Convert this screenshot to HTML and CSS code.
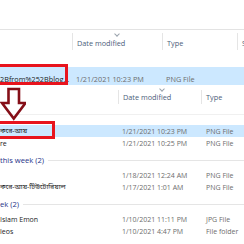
FILE: index.html
```html
<!DOCTYPE html>
<html>
<head>
	<title>explorer list</title>
	<link rel="stylesheet" href="styles.css">
</head>
<body>

<!-- first shot: the file as downloaded -->
<div class="shot shot-top">
	<div class="blank"></div>
	<div class="head head-top">
		<div class="hcell"></div>
		<div class="hcell sorted">Date modified</div>
		<div class="hcell">Type</div>
		<div class="hcell">S</div>
	</div>
	<div class="row row-top sel">
		<div class="name">2Bfrom%252Bblog...</div>
		<div class="date">1/21/2021 10:23 PM</div>
		<div class="type">PNG File</div>
		<span class="mark mark-top"></span>
	</div>
</div>

<!-- second shot: after rename -->
<div class="shot shot-bottom">
	<div class="head head-bottom">
		<div class="hcell"></div>
		<div class="hcell sorted">Date modified</div>
		<div class="hcell">Type</div>
	</div>

	<div class="row sel">
		<div class="name">করে-আয়</div>
		<div class="date">1/21/2021 10:23 PM</div>
		<div class="type">PNG File</div>
		<span class="mark mark-bottom"></span>
	</div>
	<div class="row">
		<div class="name">re</div>
		<div class="date">1/21/2021 10:25 PM</div>
		<div class="type">PNG File</div>
	</div>

	<div class="group"><span>this week (2)</span></div>
	<div class="row">
		<div class="name"></div>
		<div class="date">1/18/2021 12:24 AM</div>
		<div class="type">PNG File</div>
	</div>
	<div class="row">
		<div class="name">করে-আয়-টিউটোরিয়াল</div>
		<div class="date">1/17/2021 1:01 AM</div>
		<div class="type">PNG File</div>
	</div>

	<div class="group"><span>ek (2)</span></div>
	<div class="row">
		<div class="name">Islam Emon</div>
		<div class="date">1/10/2021 11:11 PM</div>
		<div class="type">JPG File</div>
	</div>
	<div class="row">
		<div class="name">leos</div>
		<div class="date">1/10/2021 4:47 PM</div>
		<div class="type">File folder</div>
	</div>

	<div class="group"><span>nth (7)</span></div>
</div>

<svg class="arrow" width="26" height="36" viewBox="-6 86 26 36">
	<polygon points="2.5,89 13,89 13,103 19.5,103 7.75,118.5 -4,103 2.5,103" fill="none" stroke="#850f18" stroke-width="2.6" stroke-linejoin="miter"/>
</svg>

</body>
</html>
```

FILE: styles.css
```css
		*{
			box-sizing: border-box;
		}
		body{
			margin: 0;
			width: 244px;
			height: 244px;
			overflow: hidden;
			position: relative;
			background: #fff;
			font-family: "Open Sans", "Noto Sans", "Noto Sans Bengali", sans-serif;
			font-size: 7px;
			color: #1b1b1b;
		}

		/* top screenshot */
		.shot-top{
			height: 85px;
		}
		.blank{
			height: 30px;
			border-bottom: 1px solid #e3e3e3;
		}
		.head{
			display: grid;
			color: #4c607a;
			font-size: 7.3px;
		}
		.head-top{
			grid-template-columns: 72px 90px 75px 1fr;
			height: 37px;
			padding-top: 3px;
		}
		.hcell{
			position: relative;
			border-left: 1px solid #e5e5e5;
			height: 17px;
			padding-left: 4px;
			padding-top: 5px;
			white-space: nowrap;
		}
		.hcell:first-child{
			border-left: none;
		}
		.sorted::before{
			content: "";
			position: absolute;
			top: -1px;
			left: 42px;
			width: 3px;
			height: 3px;
			border-right: 1px solid #9aa3ad;
			border-bottom: 1px solid #9aa3ad;
			transform: rotate(45deg);
		}

		.row{
			position: relative;
			display: grid;
			grid-template-columns: 118px 84px 1fr;
			height: 12px;
			align-items: center;
			white-space: nowrap;
		}
		.row .date, .row .type{
			color: #6d6d6d;
			padding-left: 4px;
		}
		.row .name{
			overflow: hidden;
		}
		.sel{
			background: #cce8ff;
		}
		.row-top{
			grid-template-columns: 72px 90px 1fr;
			height: 18px;
			font-size: 7.3px;
			padding-top: 5px;
		}
		.row-top .name{
			color: #1b1b1b;
		}

		/* red highlight boxes */
		.mark{
			position: absolute;
			left: -3px;
			border: 3px solid #e8141d;
		}
		.mark-top{
			top: -3px;
			width: 71px;
			height: 21px;
		}
		.mark-bottom{
			top: -4px;
			width: 58px;
			height: 18px;
		}

		/* bottom screenshot */
		.head-bottom{
			grid-template-columns: 118px 83px 1fr;
			height: 30px;
			padding-top: 5px;
			border-bottom: 1px solid #f0f0f0;
			margin-bottom: 10px;
		}
		.head-bottom .hcell{
			height: 14px;
			padding-top: 2px;
		}
		.head-bottom .sorted::before{
			top: -3px;
			left: 41px;
		}

		.group{
			display: flex;
			align-items: center;
			gap: 4px;
			height: 12px;
			margin-top: 5px;
			margin-bottom: 3px;
			color: #1e3287;
			font-size: 7.6px;
		}
		.group::after{
			content: "";
			flex: 1;
			height: 1px;
			background: #e5e5e5;
		}
		.group span{
			white-space: nowrap;
		}

		.arrow{
			position: absolute;
			left: 0;
			top: 86px;
		}
```
